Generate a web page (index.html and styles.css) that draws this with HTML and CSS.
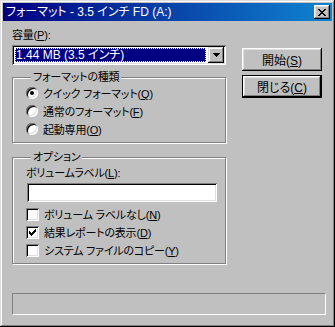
FILE: index.html
```html
<!DOCTYPE html>
<html lang="ja">
<head>
  <meta charset="UTF-8" />
  <title>フォーマット - 3.5 インチ FD (A:)</title>
  <link rel="stylesheet" href="styles.css">
</head>
<body>

  <div class="window">
    <div class="titlebar">
      <span class="title">フォーマット - 3.5 インチ FD (A:)</span>
      <button class="close-btn" aria-label="閉じる">
        <svg width="8" height="7" viewBox="0 0 8 7" shape-rendering="crispEdges">
          <path d="M0 0h2v1h-2z M6 0h2v1h-2z M1 1h2v1h-2z M5 1h2v1h-2z M2 2h4v1h-4z M3 3h2v1h-2z M2 4h4v1h-4z M1 5h2v1h-2z M5 5h2v1h-2z M0 6h2v1h-2z M6 6h2v1h-2z" fill="#000"/>
        </svg>
      </button>
    </div>

    <div class="content">
      <div class="main">
        <div class="left">
          <div class="label">容量(<u>P</u>):</div>
          <div class="combo">
            <div class="combo-value">1.44 MB (3.5 インチ)</div>
            <span class="combo-arrow">
              <svg width="7" height="4" viewBox="0 0 7 4" shape-rendering="crispEdges">
                <path d="M0 0h7v1h-7z M1 1h5v1h-5z M2 2h3v1h-3z M3 3h1v1h-1z" fill="#000"/>
              </svg>
            </span>
          </div>

          <div class="group group-type">
            <div class="group-title">フォーマットの種類</div>
            <label class="opt"><span class="radio checked"></span><span>クイック フォーマット(<u>Q</u>)</span></label>
            <label class="opt"><span class="radio"></span><span>通常のフォーマット(<u>F</u>)</span></label>
            <label class="opt"><span class="radio"></span><span>起動専用(<u>O</u>)</span></label>
          </div>

          <div class="group group-options">
            <div class="group-title">オプション</div>
            <div class="field-label">ボリュームラベル(<u>L</u>):</div>
            <div class="textbox"></div>
            <label class="opt"><span class="check"></span><span>ボリューム ラベルなし(<u>N</u>)</span></label>
            <label class="opt"><span class="check">
              <svg width="7" height="7" viewBox="0 0 7 7" shape-rendering="crispEdges">
                <path d="M6 0h1v1h-1z M5 1h2v1h-2z M0 2h1v1h-1z M4 2h3v1h-3z M0 3h2v1h-2z M3 3h3v1h-3z M0 4h5v1h-5z M1 5h3v1h-3z M2 6h1v1h-1z" fill="#000"/>
              </svg>
            </span><span>結果レポートの表示(<u>D</u>)</span></label>
            <label class="opt"><span class="check"></span><span>システム ファイルのコピー(<u>Y</u>)</span></label>
          </div>
        </div>

        <div class="right">
          <button class="btn">開始(<u>S</u>)</button>
          <button class="btn btn-default">閉じる(<u>C</u>)</button>
        </div>
      </div>

      <div class="progress"></div>
    </div>
  </div>

</body>
</html>
```

FILE: styles.css
```css
* {
  box-sizing: border-box;
}

body {
  margin: 0;
  background: #c0c0c0;
  font-family: 'Liberation Sans', 'Noto Sans CJK JP', sans-serif;
  font-size: 11px;
  font-feature-settings: "palt";
  letter-spacing: -0.2px;
  color: #000;
}

u {
  text-decoration: underline;
  text-underline-offset: 1px;
}

.window {
  width: 335px;
  height: 327px;
  padding: 3px;
  background: #c0c0c0;
  box-shadow: inset -1px -1px #000, inset 1px 1px #dfdfdf,
              inset -2px -2px #808080, inset 2px 2px #fff;
}

.titlebar {
  height: 18px;
  display: flex;
  align-items: center;
  justify-content: space-between;
  padding: 0 2px 0 3px;
  background: linear-gradient(to right, #000080, #1084d0);
  color: #fff;
}

.title {
  font-size: 12px;
  letter-spacing: 0;
  line-height: 14px;
  white-space: nowrap;
}

.close-btn {
  width: 16px;
  height: 14px;
  padding: 0;
  border: none;
  display: flex;
  align-items: center;
  justify-content: center;
  background: #c0c0c0;
  box-shadow: inset -1px -1px #000, inset 1px 1px #fff,
              inset -2px -2px #808080, inset 2px 2px #dfdfdf;
}

.content {
  padding: 7px 6px 0 9px;
}

.main {
  display: flex;
  gap: 16px;
}

.left {
  width: 214px;
  display: flex;
  flex-direction: column;
}

.label,
.field-label {
  line-height: 14px;
}

.combo {
  margin-top: 3px;
  height: 20px;
  padding: 2px;
  display: flex;
  gap: 1px;
  background: #fff;
  box-shadow: inset 1px 1px #808080, inset -1px -1px #fff,
              inset 2px 2px #000, inset -2px -2px #dfdfdf;
}

.combo-value {
  flex: 1;
  margin: 1px;
  padding-left: 1px;
  font-size: 12px;
  letter-spacing: 0;
  line-height: 14px;
  background: #000080;
  color: #fff;
  outline: 1px dotted #fff;
  outline-offset: -1px;
}

.combo-arrow {
  width: 16px;
  display: flex;
  align-items: center;
  justify-content: center;
  background: #c0c0c0;
  box-shadow: inset -1px -1px #000, inset 1px 1px #dfdfdf,
              inset -2px -2px #808080, inset 2px 2px #fff;
}

.group {
  display: flex;
  flex-direction: column;
  border: 1px solid #808080;
  box-shadow: inset 1px 1px #fff, 1px 1px #fff;
  padding: 0 8px 4px 13px;
}

.group-type {
  margin-top: 12px;
}

.group-options {
  margin-top: 14px;
}

.group-title {
  align-self: flex-start;
  margin: -8px 0 0 5px;
  padding: 0 2px;
  line-height: 14px;
  background: #c0c0c0;
}

.field-label {
  margin-top: 2px;
}

.opt {
  height: 18px;
  display: flex;
  align-items: center;
  gap: 5px;
  white-space: nowrap;
}

.radio {
  width: 12px;
  height: 12px;
  border-radius: 50%;
  display: flex;
  align-items: center;
  justify-content: center;
  background: #fff;
  box-shadow: inset 1px 1px #808080, inset -1px -1px #fff,
              inset 2px 2px #000, inset -2px -2px #dfdfdf;
}

.radio.checked::after {
  content: "";
  width: 4px;
  height: 4px;
  border-radius: 50%;
  background: #000;
}

.check {
  width: 13px;
  height: 13px;
  display: flex;
  align-items: center;
  justify-content: center;
  background: #fff;
  box-shadow: inset 1px 1px #808080, inset -1px -1px #fff,
              inset 2px 2px #000, inset -2px -2px #dfdfdf;
}

.textbox {
  margin: 3px 0 3px 1px;
  width: 190px;
  height: 19px;
  background: #fff;
  box-shadow: inset 1px 1px #808080, inset -1px -1px #fff,
              inset 2px 2px #000, inset -2px -2px #dfdfdf;
}

.right {
  width: 80px;
  padding-top: 20px;
  display: flex;
  flex-direction: column;
  gap: 4px;
}

.btn {
  height: 23px;
  padding: 0;
  border: none;
  font: inherit;
  font-size: 12px;
  letter-spacing: 0;
  color: #000;
  background: #c0c0c0;
  box-shadow: inset -1px -1px #000, inset 1px 1px #fff,
              inset -2px -2px #808080, inset 2px 2px #dfdfdf;
}

.btn-default {
  box-shadow: inset 0 0 0 1px #000, inset -2px -2px #000, inset 2px 2px #fff,
              inset -3px -3px #808080, inset 3px 3px #dfdfdf;
}

.progress {
  margin-top: 29px;
  height: 22px;
  border: 1px solid;
  border-color: #808080 #fff #fff #808080;
}
```
